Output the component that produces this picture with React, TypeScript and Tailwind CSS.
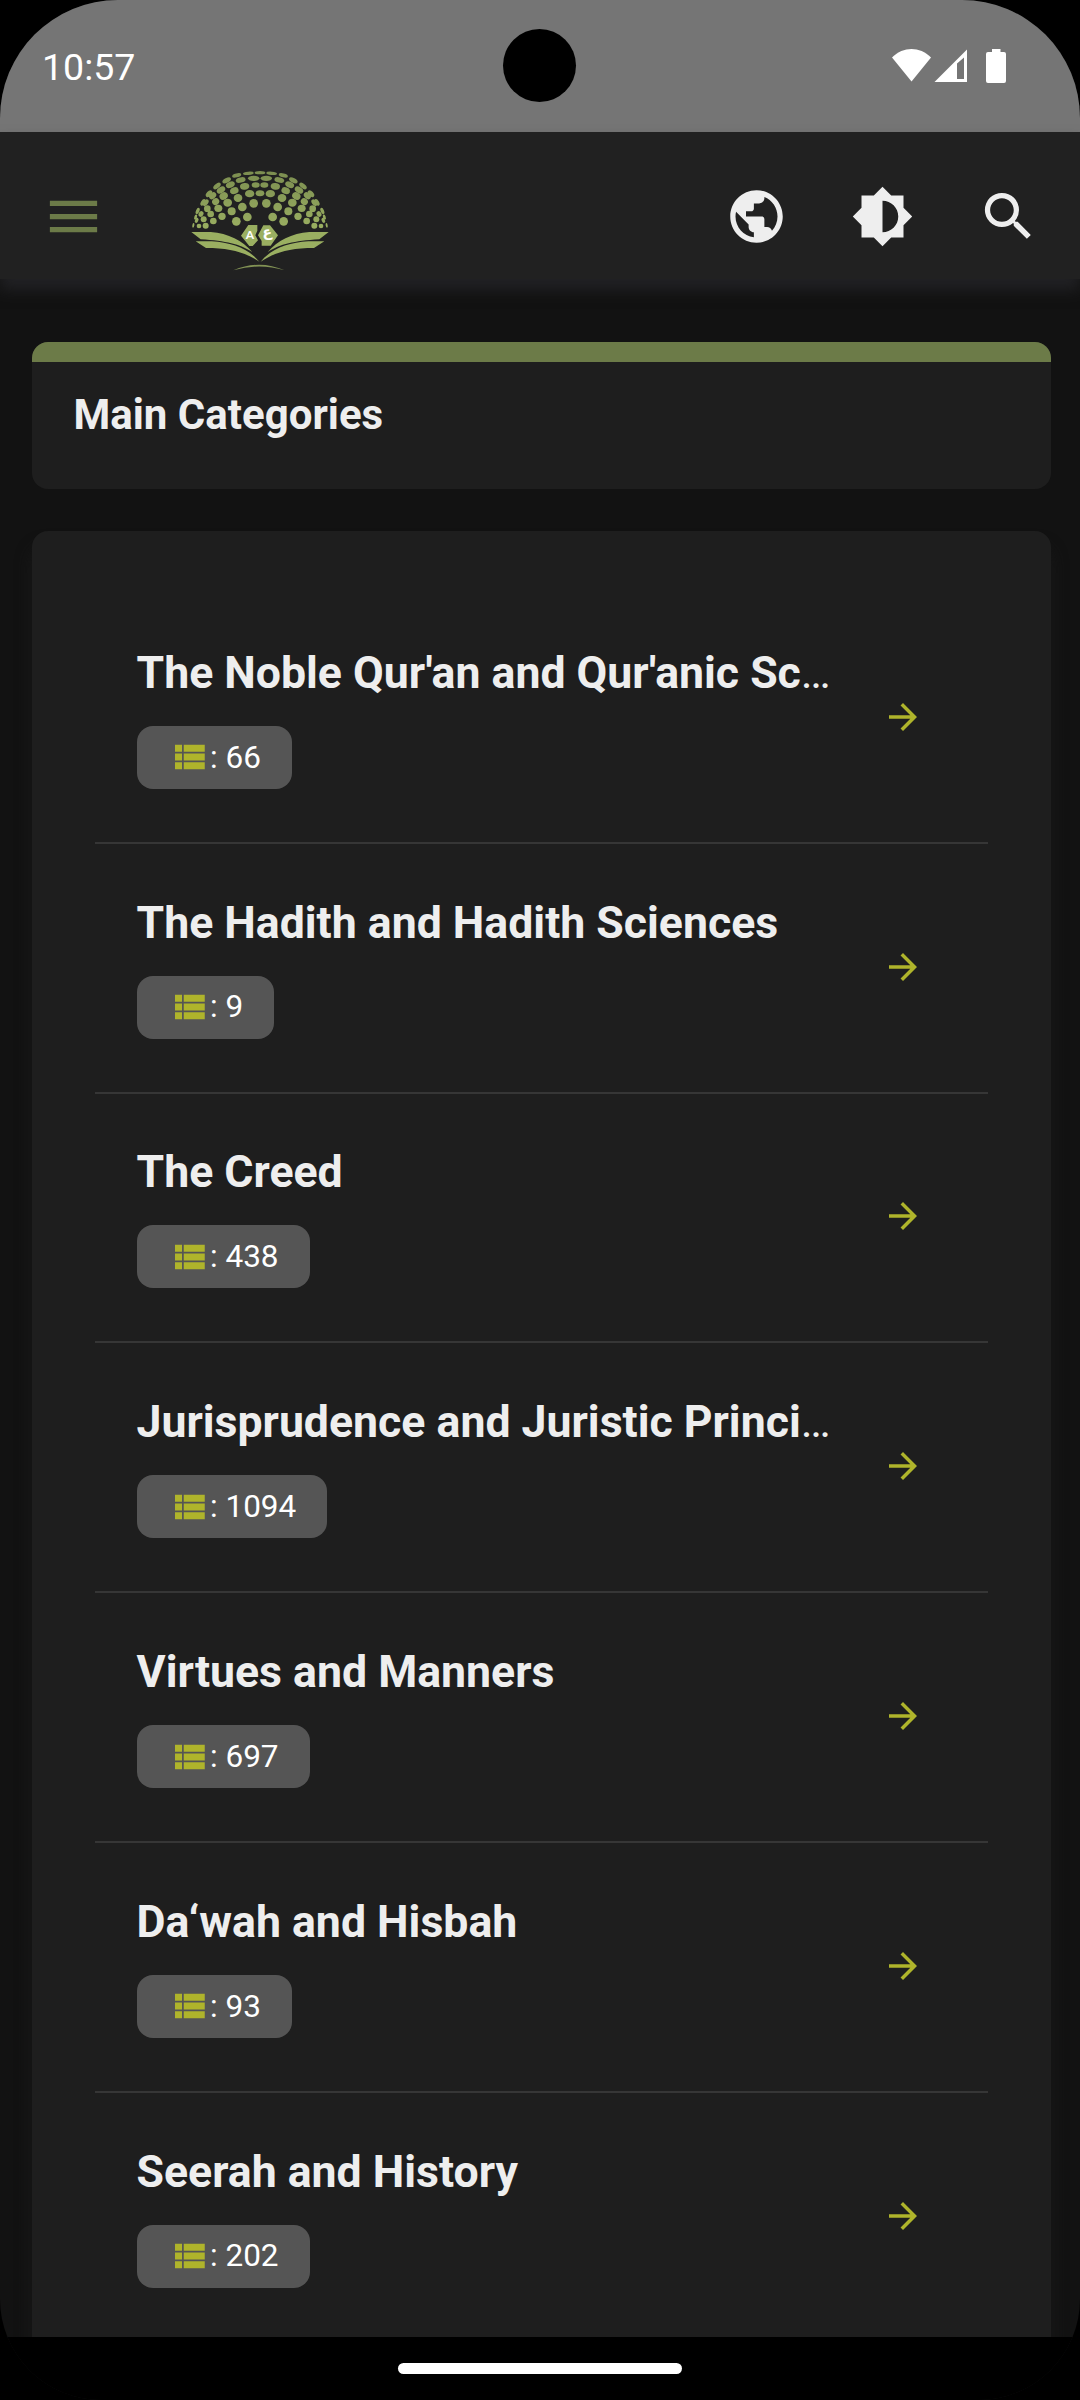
import { MdArrowForward, MdBrightnessMedium, MdMenu, MdPublic, MdSearch } from 'react-icons/md'

const categories = [
  { title: "The Noble Qur'an and Qur'anic Sc", cut: true, count: 66 },
  { title: 'The Hadith and Hadith Sciences', cut: false, count: 9 },
  { title: 'The Creed', cut: false, count: 438 },
  { title: 'Jurisprudence and Juristic Princi', cut: true, count: 1094 },
  { title: 'Virtues and Manners', cut: false, count: 697 },
  { title: 'Da‘wah and Hisbah', cut: false, count: 93 },
  { title: 'Seerah and History', cut: false, count: 202 },
]

// cx, cy, rx, ry, rotation - left half of the dome, mirrored for the right
const dots = [
  [205, 40, 16, 5, -4], [170, 46, 14, 6, -14], [140, 61, 14, 7, -28], [111, 78, 13, 7, -38],
  [87, 101, 12, 7, -48], [69, 127, 11, 6, -58], [53, 153, 10, 5, -66], [47, 171, 8, 4, -72], [40, 196, 7, 3, -80],
  [221, 55, 17, 8, 0], [182, 60, 15, 8, -12], [151, 74, 14, 9, -24], [123, 90, 14, 9, -34],
  [98, 107, 12, 9, -44], [77, 128, 11, 7, -50], [63, 162, 9, 7, -60], [50, 181, 8, 5, -65],
  [227, 75, 12, 8, 0], [194, 79, 14, 10, -6], [163, 92, 13, 10, -20], [131, 108, 13, 11, -34],
  [107, 125, 11, 10, -40], [82, 146, 10, 10, 0], [71, 178, 9, 9, 0], [57, 198, 7, 7, 0],
  [209, 101, 14, 11, 0], [174, 114, 13, 12, 0], [143, 128, 13, 12, 0], [115, 145, 12, 11, 0],
  [92, 162, 10, 10, 0], [221, 130, 13, 13, 0], [187, 141, 13, 13, 0], [155, 154, 12, 12, 0],
  [126, 169, 11, 11, 0], [100, 183, 10, 10, 0], [77, 197, 9, 9, 0], [202, 171, 13, 13, 0], [169, 184, 13, 13, 0],
]

function LogoHalf() {
  return (
    <>
      {dots.map(([cx, cy, rx, ry, r]) => (
        <ellipse key={`${cx}-${cy}`} cx={cx} cy={cy} rx={rx} ry={ry} transform={`rotate(${r} ${cx} ${cy})`} />
      ))}
      <path d="M34 216H92C145 220 188 242 217 276C178 252 140 243 62 238Z" />
      <path d="M47 244H95C155 247 208 268 238 305C195 277 150 264 78 264Z" />
    </>
  )
}

function Logo() {
  return (
    <svg viewBox="0 0 480 360" className="w-[160px] h-[120px]">
      <defs>
        <linearGradient id="dome" gradientUnits="userSpaceOnUse" x1="0" y1="30" x2="0" y2="210">
          <stop offset="0" stopColor="#7b8d50" />
          <stop offset="1" stopColor="#9aaf61" />
        </linearGradient>
      </defs>
      <g fill="url(#dome)">
        <LogoHalf />
        <g transform="translate(480 0) scale(-1 1)">
          <LogoHalf />
        </g>
        <ellipse cx="240" cy="38" rx="16" ry="5" />
        <ellipse cx="240" cy="100" rx="13" ry="9" />
        <path d="M205 195H232V212L226 226L234 241L218 258H208L183 227Z" />
        <path d="M250 196H270L294 226L272 257H245V243L234 226Z" />
        <path d="M160 331Q238 297 314 331Q238 308 160 331Z" opacity=".8" />
      </g>
      <g fill="#fff" fontWeight="700" textAnchor="middle">
        <text x="210" y="237" fontSize="36" fontFamily="Lato, sans-serif">A</text>
        <text x="262" y="231" fontSize="42" fontFamily="DejaVu Sans, sans-serif">ع</text>
      </g>
    </svg>
  )
}

function StatusBar() {
  return (
    <div className="relative flex h-[132px] shrink-0 items-center justify-between bg-[#757575] pl-[42px] pr-[74px]">
      <span className="pt-[4px] text-[37.5px] leading-none text-white">10:57</span>
      <div className="absolute left-[503px] top-[29px] h-[73px] w-[73px] rounded-full bg-black" />
      <svg viewBox="0 0 114 34" fill="#fff" className="h-[34px] w-[114px]">
        <path d="M0 8.5C11.5-2.8 27.5-2.8 39 8.5L19.5 32.5Z" />
        <path fillRule="evenodd" d="M42.500 33L75 .5V33ZM65 14.500V30H72V8.500Z" />
        <path d="M100 0h8.500v3h3.500q2 0 2 2v27q0 2-2 2h-16q-2 0-2-2V5q0-2 2-2h4Z" />
      </svg>
    </div>
  )
}

function Header() {
  return (
    <header className="relative z-10 flex h-[147px] shrink-0 items-start bg-[#212121] shadow-[0_11px_13px_0_#212124]">
      <div className="flex h-[168px] w-[147px] items-center justify-center">
        <MdMenu className="h-[63px] w-[63px] text-[#6c7b48]" />
      </div>
      <div className="ml-[33px] mt-[28px]">
        <Logo />
      </div>
      <div className="ml-auto mr-[9px] flex h-[168px] items-center text-[#eee]">
        <MdPublic className="mx-[31.5px] h-[63px] w-[63px]" />
        <MdBrightnessMedium className="mx-[31.5px] h-[63px] w-[63px]" />
        <MdSearch className="mx-[31.5px] h-[63px] w-[63px]" />
      </div>
    </header>
  )
}

function CategoryRow({ title, cut, count }: { title: string; cut: boolean; count: number }) {
  return (
    <li className="flex h-[249.800px] items-center justify-between border-b-2 border-[#363636] pb-[2px] pl-[41.500px] pr-[64px]">
      <div>
        <h2 className="text-[44.625px] leading-[56px] font-bold whitespace-nowrap text-[#eee]">
          {title}
          {cut && <span className="font-normal">…</span>}
        </h2>
        <div className="mt-[25px] flex h-[63px] w-fit items-center rounded-2xl bg-[#555] pl-[31.500px] pr-[31px]">
          <svg viewBox="0 0 24 24" fill="#afb42b" className="h-[42px] w-[42px]">
            <path d="M4 14h4v-4H4v4zm0 5h4v-4H4v4zM4 9h4V5H4v4zm5 5h12v-4H9v4zm0 5h12v-4H9v4zM9 5v4h12V5H9z" />
          </svg>
          <span className="text-[31.500px] leading-none text-white">: {count}</span>
        </div>
      </div>
      <MdArrowForward className="h-[42px] w-[42px] text-[#afb42b]" />
    </li>
  )
}

export default function App() {
  return (
    <div className="h-[2400px] w-[1080px] overflow-hidden bg-black font-[Roboto,sans-serif]">
      <div className="flex h-full flex-col overflow-hidden rounded-t-[118px] rounded-b-[101px] bg-[#121212]">
        <StatusBar />
        <Header />
        <main className="flex-1 overflow-hidden pl-[32px] pr-[29px] pt-[63px]">
          <section className="h-[147px] overflow-hidden rounded-2xl bg-[#1e1e1e]">
            <div className="h-[20px] bg-[#6c7b48]" />
            <h1 className="pl-[41.500px] pt-[28px] text-[42px] leading-[50px] font-bold text-[#eee]">Main Categories</h1>
          </section>
          <ul className="mt-[42px] rounded-2xl bg-[#1e1e1e] px-[63px] pt-[63px] pb-[63px] shadow-[0_16px_16px_0_#191919]">
            {categories.map(c => (
              <CategoryRow key={c.title} {...c} />
            ))}
          </ul>
        </main>
        <nav className="flex h-[63px] shrink-0 items-center justify-center bg-black">
          <div className="h-[11px] w-[284px] rounded-full bg-white" />
        </nav>
      </div>
    </div>
  )
}
